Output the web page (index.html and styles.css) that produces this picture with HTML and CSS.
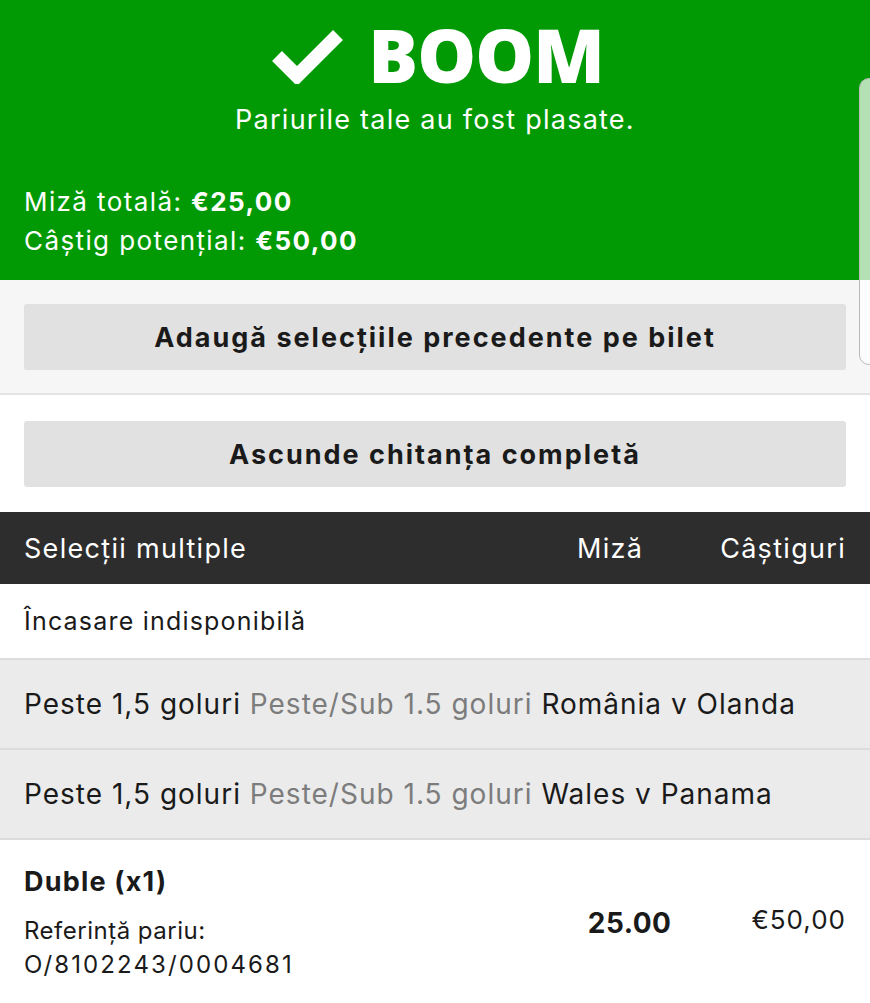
FILE: index.html
```html
<!DOCTYPE html>
<html lang="ro">
<head>
<meta charset="utf-8">
<link rel="stylesheet" href="styles.css">
</head>
<body>
<div class="page">
  <header class="hero">
    <div class="boom">
      <svg class="check" viewBox="0 0 72 56" width="72" height="56"><path d="M5 28 L25 48 L66 7" fill="none" stroke="#fff" stroke-width="14" stroke-linejoin="miter" stroke-linecap="butt"/></svg>
      <span class="boom-text">BOOM</span>
    </div>
    <p class="sub">Pariurile tale au fost plasate.</p>
    <div class="totals">
      <div>Miză totală: <b>€25,00</b></div>
      <div>Câştig potenţial: <b>€50,00</b></div>
    </div>
  </header>
  <section class="bar bar-grey">
    <button class="btn">Adaugă selecţiile precedente pe bilet</button>
  </section>
  <section class="bar bar-white">
    <button class="btn">Ascunde chitanţa completă</button>
  </section>
  <div class="thead">
    <span class="th-main">Selecţii multiple</span>
    <span class="th-stake">Miză</span>
    <span class="th-win">Câştiguri</span>
  </div>
  <div class="row row-white">Încasare indisponibilă</div>
  <div class="row row-grey">Peste 1,5 goluri <span class="muted">Peste/Sub 1.5 goluri</span> România v Olanda</div>
  <div class="row row-grey">Peste 1,5 goluri <span class="muted">Peste/Sub 1.5 goluri</span> Wales v Panama</div>
  <div class="bet">
    <div class="bet-info">
      <div class="bet-title">Duble (x1)</div>
      <div class="bet-ref">Referinţă pariu:<br><span class="ref-num">O/8102243/0004681</span></div>
    </div>
    <div class="bet-stake">25.00</div>
    <div class="bet-win">€50,00</div>
  </div>
  <div class="side-panel"></div>
</div>
</body>
</html>
```
FILE: styles.css
```css
* { box-sizing: border-box; }
html, body { margin: 0; padding: 0; }
body {
  font-family: Inter, Roboto, "Liberation Sans", Arial, sans-serif;
  color: #1a1a1a;
  background: #fff;
  width: 870px;
  height: 1003px;
  overflow: hidden;
}
.page { position: relative; }
.hero {
  background: #019a04;
  color: #fff;
  height: 280px;
  padding: 18px 24px 0;
}
.boom {
  display: flex;
  justify-content: center;
  align-items: center;
  gap: 24px;
  height: 74px;
  padding-left: 2px;
}
.check { margin-top: 2px; margin-left: 4px; }
.boom-text {
  font-family: "Open Sans", sans-serif;
  font-weight: 800;
  font-size: 74px;
  line-height: 1;
  letter-spacing: -1px;
}
.sub {
  margin: 12px 0 0;
  text-align: center;
  font-size: 27px;
  line-height: 32px;
  letter-spacing: 1.25px;
}
.totals {
  margin-top: 46px;
  font-size: 26px;
  line-height: 39px;
  letter-spacing: 1.4px;
}
.totals b { font-weight: 700; }
.bar {
  padding: 24px 24px 23px;
  border-bottom: 2px solid #e3e3e3;
}
.bar-grey { background: #f6f6f6; height: 115px; }
.bar-white { background: #fff; height: 117px; border-bottom: none; padding-top: 26px; }
.btn {
  display: block;
  width: 100%;
  height: 66px;
  border: none;
  border-radius: 3px;
  background: #e1e1e1;
  font-family: Inter, Roboto, sans-serif;
  font-weight: 700;
  font-size: 27px;
  letter-spacing: 2px;
  color: #1a1a1a;
}
.thead {
  display: flex;
  align-items: center;
  height: 72px;
  background: #2e2d2d;
  color: #fff;
  font-size: 27px;
  letter-spacing: 1.3px;
  padding: 0 24px;
}
.th-main { flex: 1; }
.th-stake { margin-right: 77px; }
.th-win { text-align: right; }
.row {
  display: flex;
  align-items: center;
  padding: 0 24px;
  font-size: 28px;
  letter-spacing: 1px;
  white-space: pre;
}
.row-white { height: 76px; background: #fff; font-size: 25px; letter-spacing: 1.2px; border-bottom: 2px solid #dcdcdc; }
.row-grey { height: 90px; background: #ebebeb; border-bottom: 2px solid #dcdcdc; }
.muted { color: #7c7c7c; }
.bet {
  display: flex;
  align-items: flex-start;
  padding: 24px 24px 0;
  background: #fff;
  letter-spacing: 0.5px;
}
.bet-info { flex: 1; }
.bet-title { font-weight: 700; font-size: 27px; line-height: 36px; letter-spacing: 1.2px; }
.bet-ref { font-size: 24px; line-height: 34px; margin-top: 14px; }
.ref-num { letter-spacing: 2.1px; }
.bet-stake { font-weight: 700; font-size: 28px; margin-top: 42px; margin-right: 80px; }
.bet-win { font-size: 26px; margin-top: 40px; letter-spacing: 1px; }
.side-panel {
  position: absolute;
  left: 859px;
  top: 78px;
  width: 30px;
  height: 287px;
  border: 1px solid #b9b9b9;
  border-radius: 10px;
  background: rgba(255,255,255,0.7);
}
```
